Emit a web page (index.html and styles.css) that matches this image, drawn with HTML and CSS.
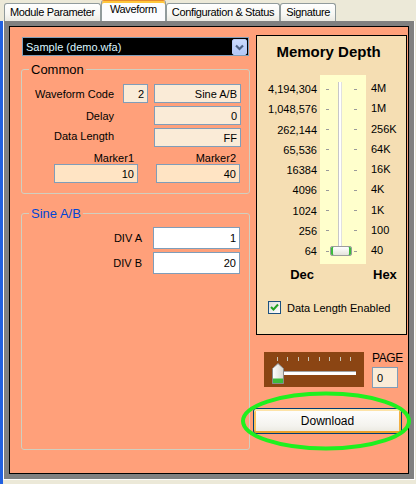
FILE: index.html
```html
<!DOCTYPE html>
<html>
<head>
<meta charset="utf-8">
<title>Waveform</title>
<link rel="stylesheet" href="styles.css">
</head>
<body>
<div class="app">
  <nav class="tabs">
    <div class="tab">Module Parameter</div>
    <div class="tab active">Waveform</div>
    <div class="tab">Configuration &amp; Status</div>
    <div class="tab">Signature</div>
  </nav>
  <div class="body-row">
    <div class="edge"></div>
    <div class="shell">
      <div class="frame">
        <div class="panel">
          <div class="left">
            <div class="combo">
              <span class="combo-text">Sample (demo.wfa)</span>
              <span class="combo-btn">
                <svg width="15" height="16" viewBox="0 0 15 16"><path d="M4 6.5 L7.5 10 L11 6.5" fill="none" stroke="#4d6185" stroke-width="2.2"/></svg>
              </span>
            </div>

            <fieldset class="group common">
              <legend>Common</legend>
              <div class="row">
                <span class="lbl">Waveform Code</span>
                <span class="field sm">2</span>
                <span class="field lg">Sine A/B</span>
              </div>
              <div class="row">
                <span class="lbl">Delay</span>
                <span class="field lg push">0</span>
              </div>
              <div class="row">
                <span class="lbl raised">Data Length</span>
                <span class="field lg push">FF</span>
              </div>
              <div class="markers">
                <div class="marker">
                  <span class="mlbl">Marker1</span>
                  <span class="field mk">10</span>
                </div>
                <div class="marker second">
                  <span class="mlbl">Marker2</span>
                  <span class="field mk">40</span>
                </div>
              </div>
            </fieldset>

            <fieldset class="group sine">
              <legend>Sine A/B</legend>
              <div class="row tall">
                <span class="lbl wide">DIV A</span>
                <span class="field white">1</span>
              </div>
              <div class="row tall">
                <span class="lbl wide">DIV B</span>
                <span class="field white">20</span>
              </div>
            </fieldset>
          </div>

          <div class="right">
            <div class="memory">
              <div class="mem-title">Memory Depth</div>
              <div class="scale">
                <div class="dec">
                  <span>4,194,304</span><span>1,048,576</span><span>262,144</span>
                  <span>65,536</span><span>16384</span><span>4096</span>
                  <span>1024</span><span>256</span><span>64</span>
                </div>
                <div class="rail">
                  <div class="tick-row"><i></i><i></i></div>
                  <div class="tick-row"><i></i><i></i></div>
                  <div class="tick-row"><i></i><i></i></div>
                  <div class="tick-row"><i></i><i></i></div>
                  <div class="tick-row"><i></i><i></i></div>
                  <div class="tick-row"><i></i><i></i></div>
                  <div class="tick-row"><i></i><i></i></div>
                  <div class="tick-row"><i></i><i></i></div>
                  <div class="tick-row"><i></i><i></i></div>
                  <div class="v-track"></div>
                  <div class="v-thumb"></div>
                </div>
                <div class="hex">
                  <span>4M</span><span>1M</span><span>256K</span>
                  <span>64K</span><span>16K</span><span>4K</span>
                  <span>1K</span><span>100</span><span>40</span>
                </div>
              </div>
              <div class="axis">
                <span class="axis-dec">Dec</span>
                <span class="axis-hex">Hex</span>
              </div>
              <div class="check">
                <span class="box">
                  <svg width="11" height="11" viewBox="0 0 11 11"><path d="M2 5 L4.5 7.5 L9 2.5" fill="none" stroke="#21a121" stroke-width="2"/></svg>
                </span>
                <span>Data Length Enabled</span>
              </div>
            </div>

            <div class="pager">
              <div class="hslider">
                <div class="h-ticks"><i></i><i></i><i></i><i></i><i></i><i></i><i></i><i></i></div>
                <div class="h-track"></div>
                <svg class="h-thumb" width="12" height="21" viewBox="0 0 12 21">
                  <defs>
                    <linearGradient id="thumbFill" x1="0" y1="0" x2="1" y2="0">
                      <stop offset="0" stop-color="#ffffff"/>
                      <stop offset="1" stop-color="#d8d8d0"/>
                    </linearGradient>
                  </defs>
                  <path d="M6 0.5 L11.5 5.5 L11.5 20.5 L0.5 20.5 L0.5 5.5 Z" fill="url(#thumbFill)" stroke="#8a8a8a"/>
                  <rect x="1" y="15.5" width="10" height="4.5" fill="#3cbb3c"/>
                </svg>
              </div>
              <div class="page-num">
                <span class="page-lbl">PAGE</span>
                <span class="field pg">0</span>
              </div>
            </div>

            <button class="btn">Download</button>
          </div>
        </div>
      </div>
    </div>
  </div>
  <svg class="ring" width="180" height="70" viewBox="0 0 180 70">
    <ellipse cx="88" cy="33" rx="83" ry="27.5" fill="none" stroke="#1ff01f" stroke-width="4"/>
  </svg>
</div>
</body>
</html>
```

FILE: styles.css
```css
* { box-sizing: border-box; }

body {
  margin: 0;
  background: #ece9d8;
  font-family: "Liberation Sans", Arial, sans-serif;
  font-size: 11px;
  color: #000;
}

.app {
  position: relative;
  width: 416px;
  height: 484px;
  overflow: hidden;
}

/* ---------- tab strip ---------- */
.tabs {
  display: flex;
  align-items: flex-end;
  height: 21px;
  padding-left: 4px;
}

.tab {
  height: 18px;
  padding: 0 5px;
  line-height: 17px;
  letter-spacing: -0.35px;
  border: 1px solid #919b9c;
  border-bottom: 0;
  border-radius: 3px 3px 0 0;
  background: linear-gradient(#ffffff, #f7f7f3 60%, #ebeae2);
  white-space: nowrap;
}

.tab.active {
  height: 21px;
  line-height: 16px;
  padding: 0 8px;
  background: #fcfcfe;
  border-top: 1px solid #e68b2c;
  box-shadow: inset 0 2px 0 #ffc73c;
}

/* ---------- page frame ---------- */
.body-row {
  display: flex;
  height: 463px;
}

.edge {
  width: 3px;
  background: #2160e0;
}

.shell {
  width: 412px;
  height: 459px;
  border: 1px solid #ffffff;
  border-top: 0;
}

.frame {
  height: 100%;
  border: 5px solid #808080;
}

.panel {
  display: flex;
  gap: 6px;
  height: 100%;
  padding-left: 11px;
  border: 1px solid #000;
  background: #ffa07a;
}

/* ---------- left column ---------- */
.left {
  display: flex;
  flex-direction: column;
  width: 229px;
  padding: 10px 0 23px;
}

.combo {
  display: flex;
  align-items: center;
  width: 227px;
  height: 19px;
  margin-left: 1px;
  border: 1px solid #7f9db9;
  background: #000;
  padding: 0 1px 0 3px;
}

.combo-text {
  flex: 1;
  color: #dcf6ff;
}

.combo-btn {
  display: flex;
  width: 15px;
  height: 16px;
  border-radius: 2px;
  background: linear-gradient(#cbdafe, #b3c7f6);
  border: 1px solid #b9cbf7;
}

.combo-btn svg { margin: -1px; }

.group {
  margin: 0;
  border: 1px solid #d0cfc0;
  border-radius: 3px;
  padding: 0;
  min-width: 0;
}

.group legend {
  margin-left: 7px;
  padding: 0 2px;
  font-size: 13px;
  line-height: 15px;
}

.common {
  margin-top: 6px;
  padding: 7px 0 10px;
}

.sine {
  flex: 1;
  margin-top: 12px;
  padding-top: 6px;
}

.sine legend { color: #0046d5; }

.row {
  display: flex;
  align-items: center;
  height: 19px;
  margin-bottom: 3px;
}

.row.tall {
  height: 22px;
  margin-bottom: 3px;
}

.lbl {
  width: 92px;
  text-align: right;
}

.lbl.raised { margin-top: -4px; }

.lbl.wide { width: 120px; }

.field {
  display: flex;
  align-items: center;
  justify-content: flex-end;
  height: 19px;
  padding-right: 3px;
  border: 1px solid #7f9db9;
  background: #faebd7;
}

.field.sm { width: 25px; margin-left: 9px; }
.field.lg { width: 87px; margin-left: 6px; }
.field.lg.push { margin-left: 40px; }

.field.white {
  width: 87px;
  height: 22px;
  margin-left: 11px;
  background: #fff;
}

.markers {
  display: flex;
  margin-top: 5px;
  padding-left: 32px;
}

.marker {
  display: flex;
  flex-direction: column;
  width: 84px;
}

.marker.second { margin-left: 18px; }

.mlbl {
  line-height: 12px;
  text-align: right;
  padding-right: 4px;
}

.field.mk {
  width: 84px;
  background: #ffe4c4;
}

/* ---------- right column ---------- */
.right {
  display: flex;
  flex-direction: column;
  width: 151px;
  padding-top: 8px;
}

.memory {
  height: 300px;
  border: 1px solid #000;
  background: #f5deb3;
}

.mem-title {
  margin-top: 7px;
  font-size: 15px;
  font-weight: bold;
  line-height: 18px;
  text-align: center;
  padding-right: 6px;
}

.scale {
  display: flex;
  margin-top: 14px;
}

.dec, .hex {
  display: flex;
  flex-direction: column;
  padding-top: 4px;
}

.dec span, .hex span,
.tick-row {
  height: 20.25px;
  line-height: 20px;
}

.dec {
  width: 60px;
  text-align: right;
}

.hex { margin-left: 5px; }
.hex span { line-height: 18px; }

.rail {
  position: relative;
  width: 46px;
  height: 189px;
  margin-left: 3px;
  padding-top: 4px;
  background: #ffffcc;
}

.tick-row {
  display: flex;
  align-items: center;
}

.tick-row i {
  width: 3px;
  height: 1px;
  margin-left: 6px;
  background: #9a9a9a;
}

.tick-row i + i { margin-left: 25px; }

.v-track {
  position: absolute;
  left: 18px;
  top: 7px;
  bottom: 8px;
  width: 4px;
  background: linear-gradient(to right, #a9a9a9, #ffffff 35%, #ffffff 65%, #d0d0d0);
}

.v-thumb {
  position: absolute;
  left: 10px;
  top: 171px;
  width: 22px;
  height: 10px;
  border: 1px solid #9c9c9c;
  border-radius: 2px;
  background: linear-gradient(#ffffff, #e4e4dc);
  box-shadow: inset 2px 0 0 #3cbb3c, inset -2px 0 0 #3cbb3c;
}

.axis {
  display: flex;
  margin-top: 3px;
  font-size: 13px;
  font-weight: bold;
  line-height: 16px;
}

.axis-dec {
  width: 57px;
  text-align: right;
}

.axis-hex { margin-left: 59px; }

.check {
  display: flex;
  align-items: center;
  margin-top: 18px;
  padding-left: 11px;
  height: 13px;
}

.check .box {
  display: flex;
  align-items: center;
  justify-content: center;
  width: 13px;
  height: 13px;
  margin-right: 6px;
  border: 1px solid #1c5180;
  background: linear-gradient(135deg, #dcdcd7, #ffffff);
}

/* ---------- page slider ---------- */
.pager {
  display: flex;
  margin-top: 17px;
}

.hslider {
  position: relative;
  width: 100px;
  height: 35px;
  margin-left: 8px;
  background: #8b4513;
}

.h-ticks {
  display: flex;
  justify-content: space-between;
  width: 74px;
  height: 4px;
  margin: 5px 0 0 13px;
}

.h-ticks i {
  width: 1px;
  background: #c8c4b4;
}

.h-track {
  width: 81px;
  height: 4px;
  margin: 10px 0 0 11px;
  background: #fff;
  border-top: 1px solid #a0a0a0;
  border-left: 1px solid #a0a0a0;
}

.h-thumb {
  position: absolute;
  left: 8px;
  top: 11px;
}

.page-num {
  display: flex;
  flex-direction: column;
  margin-left: 8px;
}

.page-lbl {
  line-height: 12px;
  font-size: 12px;
  letter-spacing: -0.4px;
}

.field.pg {
  width: 26px;
  height: 21px;
  margin-top: 3px;
  justify-content: flex-start;
  padding-left: 4px;
}

.btn {
  width: 149px;
  height: 26px;
  margin: 20px 0 0 -3px;
  padding: 0;
  font-family: inherit;
  font-size: 12px;
  color: #000;
  border: 1px solid #003c74;
  border-radius: 3px;
  background: linear-gradient(#ffffff, #f4f3ee 70%, #e9e7de);
  box-shadow: inset 0 2px 0 #fde3a8, inset 0 -2px 0 #ed9f2a, inset 2px 0 0 #f8c25c, inset -2px 0 0 #f3b143;
}

/* highlight ring drawn over the download button */
.ring {
  position: absolute;
  left: 238px;
  top: 388px;
}
```
